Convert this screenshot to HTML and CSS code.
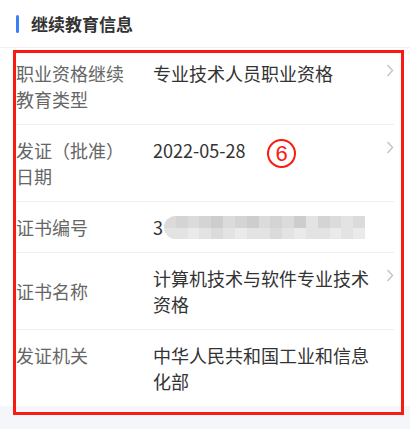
FILE: index.html
```html
<!DOCTYPE html>
<html lang="zh-CN">

<head>
    <meta charset="UTF-8">
    <meta name="viewport" content="width=device-width, initial-scale=1.0">
    <title>继续教育信息</title>
    <link rel="stylesheet" href="styles.css">
</head>

<body>
    <div class="page">
        <div class="section-title"><span class="title-bar"></span>继续教育信息</div>

        <div class="card">
            <div class="row">
                <div class="label">职业资格继续教育类型</div>
                <div class="value">专业技术人员职业资格</div>
                <svg class="arrow" width="8" height="13" viewBox="0 0 8 13"><polyline points="1.5,1 6.5,6.5 1.5,12" /></svg>
            </div>
            <div class="row">
                <div class="label">发证（批准）日期</div>
                <div class="value">2022-05-28</div>
                <svg class="arrow" width="8" height="13" viewBox="0 0 8 13"><polyline points="1.5,1 6.5,6.5 1.5,12" /></svg>
            </div>
            <div class="row">
                <div class="label">证书编号</div>
                <div class="value">3<span class="mosaic">
                    <i class="g3"></i><i class="g2"></i><i class="g3"></i><i class="g2"></i><i class="g1"></i><i class="g3"></i><i class="g2"></i><i class="g1"></i><i class="g3"></i><i class="g2"></i><i class="g3"></i><i class="g1"></i><i class="g4"></i><i class="g2"></i><i class="g3"></i><i class="g4"></i><i class="g3"></i>
                    <i class="g4"></i><i class="g4"></i><i class="g5"></i><i class="g4"></i><i class="g3"></i><i class="g4"></i><i class="g5"></i><i class="g4"></i><i class="g4"></i><i class="g3"></i><i class="g4"></i><i class="g5"></i><i class="g4"></i><i class="g4"></i><i class="g5"></i><i class="g4"></i><i class="g5"></i>
                </span></div>
            </div>
            <div class="row">
                <div class="label label-middle">证书名称</div>
                <div class="value">计算机技术与软件专业技术资格</div>
                <svg class="arrow" width="8" height="13" viewBox="0 0 8 13"><polyline points="1.5,1 6.5,6.5 1.5,12" /></svg>
            </div>
            <div class="row">
                <div class="label">发证机关</div>
                <div class="value">中华人民共和国工业和信息化部</div>
            </div>
        </div>

        <!-- 标注 -->
        <div class="mark-frame"></div>
        <div class="mark-num">6</div>
    </div>
</body>

</html>
```

FILE: styles.css
```css
body {
    margin: 0;
    font-family: "Noto Sans CJK SC", "Noto Sans", sans-serif;
    background-color: #f5f6fa;
    color: #333;
}

.page {
    position: relative;
    width: 410px;
    height: 429px;
    overflow: hidden;
}

.section-title {
    display: flex;
    align-items: center;
    height: 47px;
    padding-left: 16px;
    background-color: #fff;
    border-bottom: 1px solid #f0f0f2;
    font-size: 17px;
    font-weight: bold;
    color: #333;
}

.title-bar {
    width: 3px;
    height: 18px;
    border-radius: 2px;
    background-color: #3b7ff5;
    margin-right: 12px;
}

.card {
    background-color: #fff;
}

.row {
    display: flex;
    align-items: flex-start;
    margin: 0 16px;
    padding: 12px 0;
    border-bottom: 1px solid #efefef;
    font-size: 18px;
    line-height: 26px;
}

.row:last-child {
    border-bottom: none;
}

.label {
    width: 120px;
    margin-right: 17px;
    flex: none;
    color: #666;
}

.label-middle {
    align-self: center;
}

.value {
    width: 222px;
    flex: none;
    color: #333;
}

.arrow {
    flex: none;
    margin-left: 11px;
    margin-top: 4px;
}

.arrow polyline {
    fill: none;
    stroke: #c6c6c6;
    stroke-width: 1.5;
}

.mosaic {
    display: inline-grid;
    grid-template-columns: repeat(17, 1fr);
    grid-template-rows: 12px 11px;
    width: 201px;
    height: 23px;
    vertical-align: top;
    margin-top: 2px;
    margin-left: 1px;
    border-radius: 12px 0 0 12px;
    overflow: hidden;
}

.mosaic i {
    display: block;
}

.g1 { background-color: #cdcdcd; }
.g2 { background-color: #d4d4d4; }
.g3 { background-color: #dbdbdb; }
.g4 { background-color: #e3e3e3; }
.g5 { background-color: #eaeaea; }

.mark-frame {
    position: absolute;
    left: 13px;
    top: 50px;
    width: 391px;
    height: 365px;
    box-sizing: border-box;
    border: 3px solid #fa1a12;
}

.mark-num {
    position: absolute;
    left: 267px;
    top: 139px;
    width: 29px;
    height: 29px;
    box-sizing: border-box;
    border: 2px solid #fa1a12;
    border-radius: 50%;
    color: #fa1a12;
    font-family: "Liberation Sans", sans-serif;
    font-size: 22px;
    line-height: 25px;
    text-align: center;
}
```
